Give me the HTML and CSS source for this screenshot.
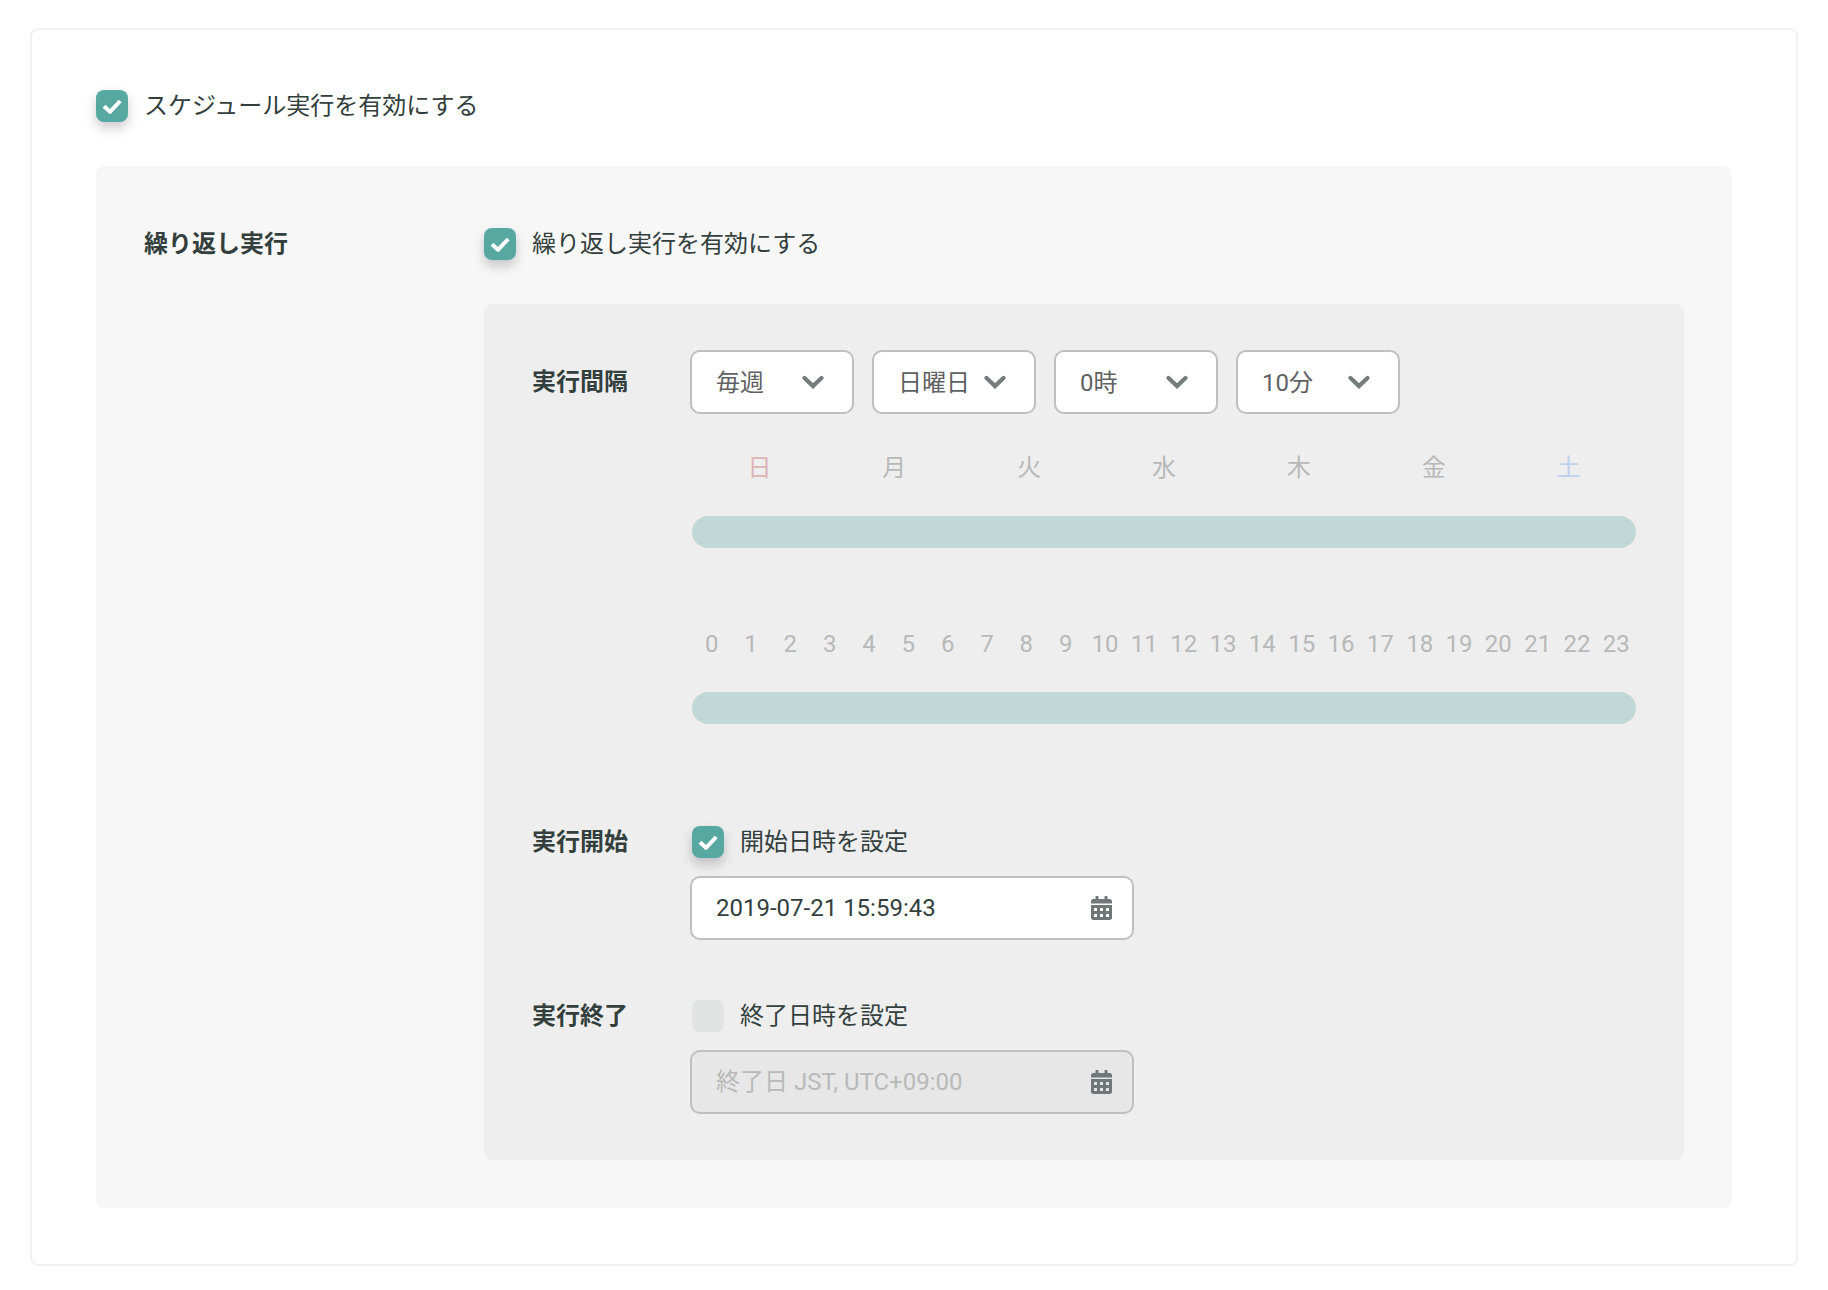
FILE: index.html
```html
<!DOCTYPE html>
<html lang="ja">
<head>
<meta charset="utf-8">
<meta name="viewport" content="width=device-width, initial-scale=1">
<title>スケジュール実行</title>
<link rel="stylesheet" href="styles.css">
</head>
<body>
<svg class="sprite" aria-hidden="true">
  <symbol id="check" viewBox="0 0 20 20"><path d="M2 10.200L8 15.800L18.200 5" fill="none" stroke="currentColor" stroke-width="4" stroke-linejoin="round"/></symbol>
  <symbol id="chevron" viewBox="0 0 22 14"><path d="M2.500 3L11 11L19.500 3" fill="none" stroke="currentColor" stroke-width="4.200" stroke-linecap="round"/></symbol>
  <symbol id="calendar" viewBox="0 0 448 512"><path fill-rule="evenodd" d="M0 464c0 26.500 21.500 48 48 48h352c26.500 0 48-21.500 48-48V192H0zM64 268q0-12 12-12h40q12 0 12 12v40q0 12-12 12H76q-12 0-12-12zM192 268q0-12 12-12h40q12 0 12 12v40q0 12-12 12h-40q-12 0-12-12zM320 268q0-12 12-12h40q12 0 12 12v40q0 12-12 12h-40q-12 0-12-12zM64 396q0-12 12-12h40q12 0 12 12v40q0 12-12 12H76q-12 0-12-12zM192 396q0-12 12-12h40q12 0 12 12v40q0 12-12 12h-40q-12 0-12-12zM320 396q0-12 12-12h40q12 0 12 12v40q0 12-12 12h-40q-12 0-12-12zM400 64h-48V16c0-8.800-7.200-16-16-16h-32c-8.800 0-16 7.200-16 16v48H160V16c0-8.800-7.200-16-16-16h-32c-8.800 0-16 7.200-16 16v48H48C21.500 64 0 85.500 0 112v48h448v-48c0-26.500-21.500-48-48-48z"/></symbol>
</svg>

<main class="card">
  <div class="check-row">
    <span class="checkbox"><input type="checkbox" id="schedule" checked><svg><use href="#check"/></svg></span>
    <label for="schedule">スケジュール実行を有効にする</label>
  </div>

  <section class="panel">
    <h2 class="heading">繰り返し実行</h2>
    <div class="panel-body">
      <div class="check-row">
        <span class="checkbox"><input type="checkbox" id="repeat" checked><svg><use href="#check"/></svg></span>
        <label for="repeat">繰り返し実行を有効にする</label>
      </div>

      <div class="settings">
        <div class="setting">
          <h3 class="heading interval-heading">実行間隔</h3>
          <div class="fields">
            <div class="selects">
              <span class="select"><select aria-label="間隔"><option>毎週</option></select><svg><use href="#chevron"/></svg></span>
              <span class="select"><select aria-label="曜日"><option>日曜日</option></select><svg><use href="#chevron"/></svg></span>
              <span class="select"><select aria-label="時"><option>0時</option></select><svg><use href="#chevron"/></svg></span>
              <span class="select"><select aria-label="分"><option>10分</option></select><svg><use href="#chevron"/></svg></span>
            </div>
            <div class="timelines">
              <div class="timeline">
                <ol class="ticks days">
                  <li class="sunday">日</li><li>月</li><li>火</li><li>水</li><li>木</li><li>金</li><li class="saturday">土</li>
                </ol>
                <div class="bar"></div>
              </div>
              <div class="timeline">
                <ol class="ticks hours">
                  <li>0</li><li>1</li><li>2</li><li>3</li><li>4</li><li>5</li><li>6</li><li>7</li><li>8</li><li>9</li><li>10</li><li>11</li><li>12</li><li>13</li><li>14</li><li>15</li><li>16</li><li>17</li><li>18</li><li>19</li><li>20</li><li>21</li><li>22</li><li>23</li>
                </ol>
                <div class="bar"></div>
              </div>
            </div>
          </div>
        </div>

        <div class="setting">
          <h3 class="heading">実行開始</h3>
          <div class="fields">
            <div class="check-row inset">
              <span class="checkbox"><input type="checkbox" id="start" checked><svg><use href="#check"/></svg></span>
              <label for="start">開始日時を設定</label>
            </div>
            <span class="date"><input type="text" value="2019-07-21 15:59:43" aria-label="開始日時"><svg><use href="#calendar"/></svg></span>
          </div>
        </div>

        <div class="setting">
          <h3 class="heading">実行終了</h3>
          <div class="fields">
            <div class="check-row inset">
              <span class="checkbox"><input type="checkbox" id="end"></span>
              <label for="end">終了日時を設定</label>
            </div>
            <span class="date"><input type="text" placeholder="終了日 JST, UTC+09:00" aria-label="終了日時" disabled><svg><use href="#calendar"/></svg></span>
          </div>
        </div>
      </div>
    </div>
  </section>
</main>
</body>
</html>
```
FILE: styles.css
```css
* {
  box-sizing: border-box;
}

body {
  margin: 0;
  padding: 28px 30px 24px;
  background: #fff;
  color: #333f3d;
  font-family: Roboto, "Noto Sans CJK JP", sans-serif;
  font-size: 24px;
  line-height: 32px;
}

.sprite {
  display: none;
}

.card {
  padding: 60px 64px 56px;
  border: 2px solid #f1f1f1;
  border-radius: 8px;
}

.check-row {
  display: flex;
  gap: 16px;
}

.inset {
  padding-left: 2px;
}

.checkbox,
.select,
.date {
  display: grid;
  align-items: center;
}

.checkbox > *,
.select > *,
.date > * {
  grid-area: 1 / 1;
}

.checkbox svg,
.select svg,
.date svg {
  pointer-events: none;
}

.checkbox input {
  appearance: none;
  width: 32px;
  height: 32px;
  margin: 0;
  border-radius: 8px;
  background: #e1e3e2;
}

.checkbox input:checked {
  background: #56a8a0;
  box-shadow: 0 6px 12px rgba(0, 0, 0, 0.2);
}

.checkbox svg {
  justify-self: center;
  width: 20px;
  height: 20px;
  color: #fff;
}

.heading {
  margin: 0;
  font-size: 24px;
  font-weight: 700;
  line-height: 32px;
}

.panel {
  display: grid;
  grid-template-columns: 340px 1fr;
  margin-top: 44px;
  padding: 62px 48px 48px;
  border-radius: 8px;
  background: #f7f7f7;
}

.settings {
  display: grid;
  gap: 60px;
  margin-top: 44px;
  padding: 46px 48px;
  border-radius: 8px;
  background: #eee;
}

.setting {
  display: grid;
  grid-template-columns: 158px 1fr;
}

.interval-heading {
  padding-top: 16px;
}

.selects {
  display: flex;
  gap: 18px;
}

.select {
  width: 164px;
}

.select select,
.date input {
  width: 100%;
  height: 64px;
  padding: 0 24px;
  border: 2px solid #bfbfbf;
  border-radius: 10px;
  background: #fff;
  color: #333f3d;
  font: inherit;
}

.select select {
  appearance: none;
  padding-top: 2px;
  color: #5f6163;
}

.select svg {
  justify-self: end;
  width: 22px;
  height: 14px;
  margin-right: 30px;
  color: #757d7c;
}

.timelines {
  display: grid;
  gap: 16px;
  margin-top: 14px;
  padding: 0 0 2px 2px;
}

.timeline {
  display: grid;
}

.timeline > * {
  grid-area: 1 / 1;
}

.ticks {
  display: grid;
  grid-auto-flow: column;
  grid-auto-columns: minmax(0, 1fr);
  height: 160px;
  margin: 0;
  padding: 0;
  color: #b6b9b8;
  list-style: none;
  text-align: center;
}

.ticks li {
  padding-top: 24px;
  box-shadow: inset 1px 0 #efefef;
}

.ticks .sunday {
  color: #dcb5b3;
}

.ticks .saturday {
  color: #bfd0ee;
}

.bar {
  height: 32px;
  margin-top: 88px;
  border-radius: 16px;
  background: #c1d9d6;
}

.date {
  width: 444px;
  max-width: 100%;
  margin-top: 18px;
}

.date input:disabled {
  background: #e7e7e7;
}

.date input::placeholder {
  color: #b8bab9;
  opacity: 1;
}

.date svg {
  justify-self: end;
  width: 21px;
  height: 24px;
  margin-right: 22px;
  fill: #6f7877;
}
```
